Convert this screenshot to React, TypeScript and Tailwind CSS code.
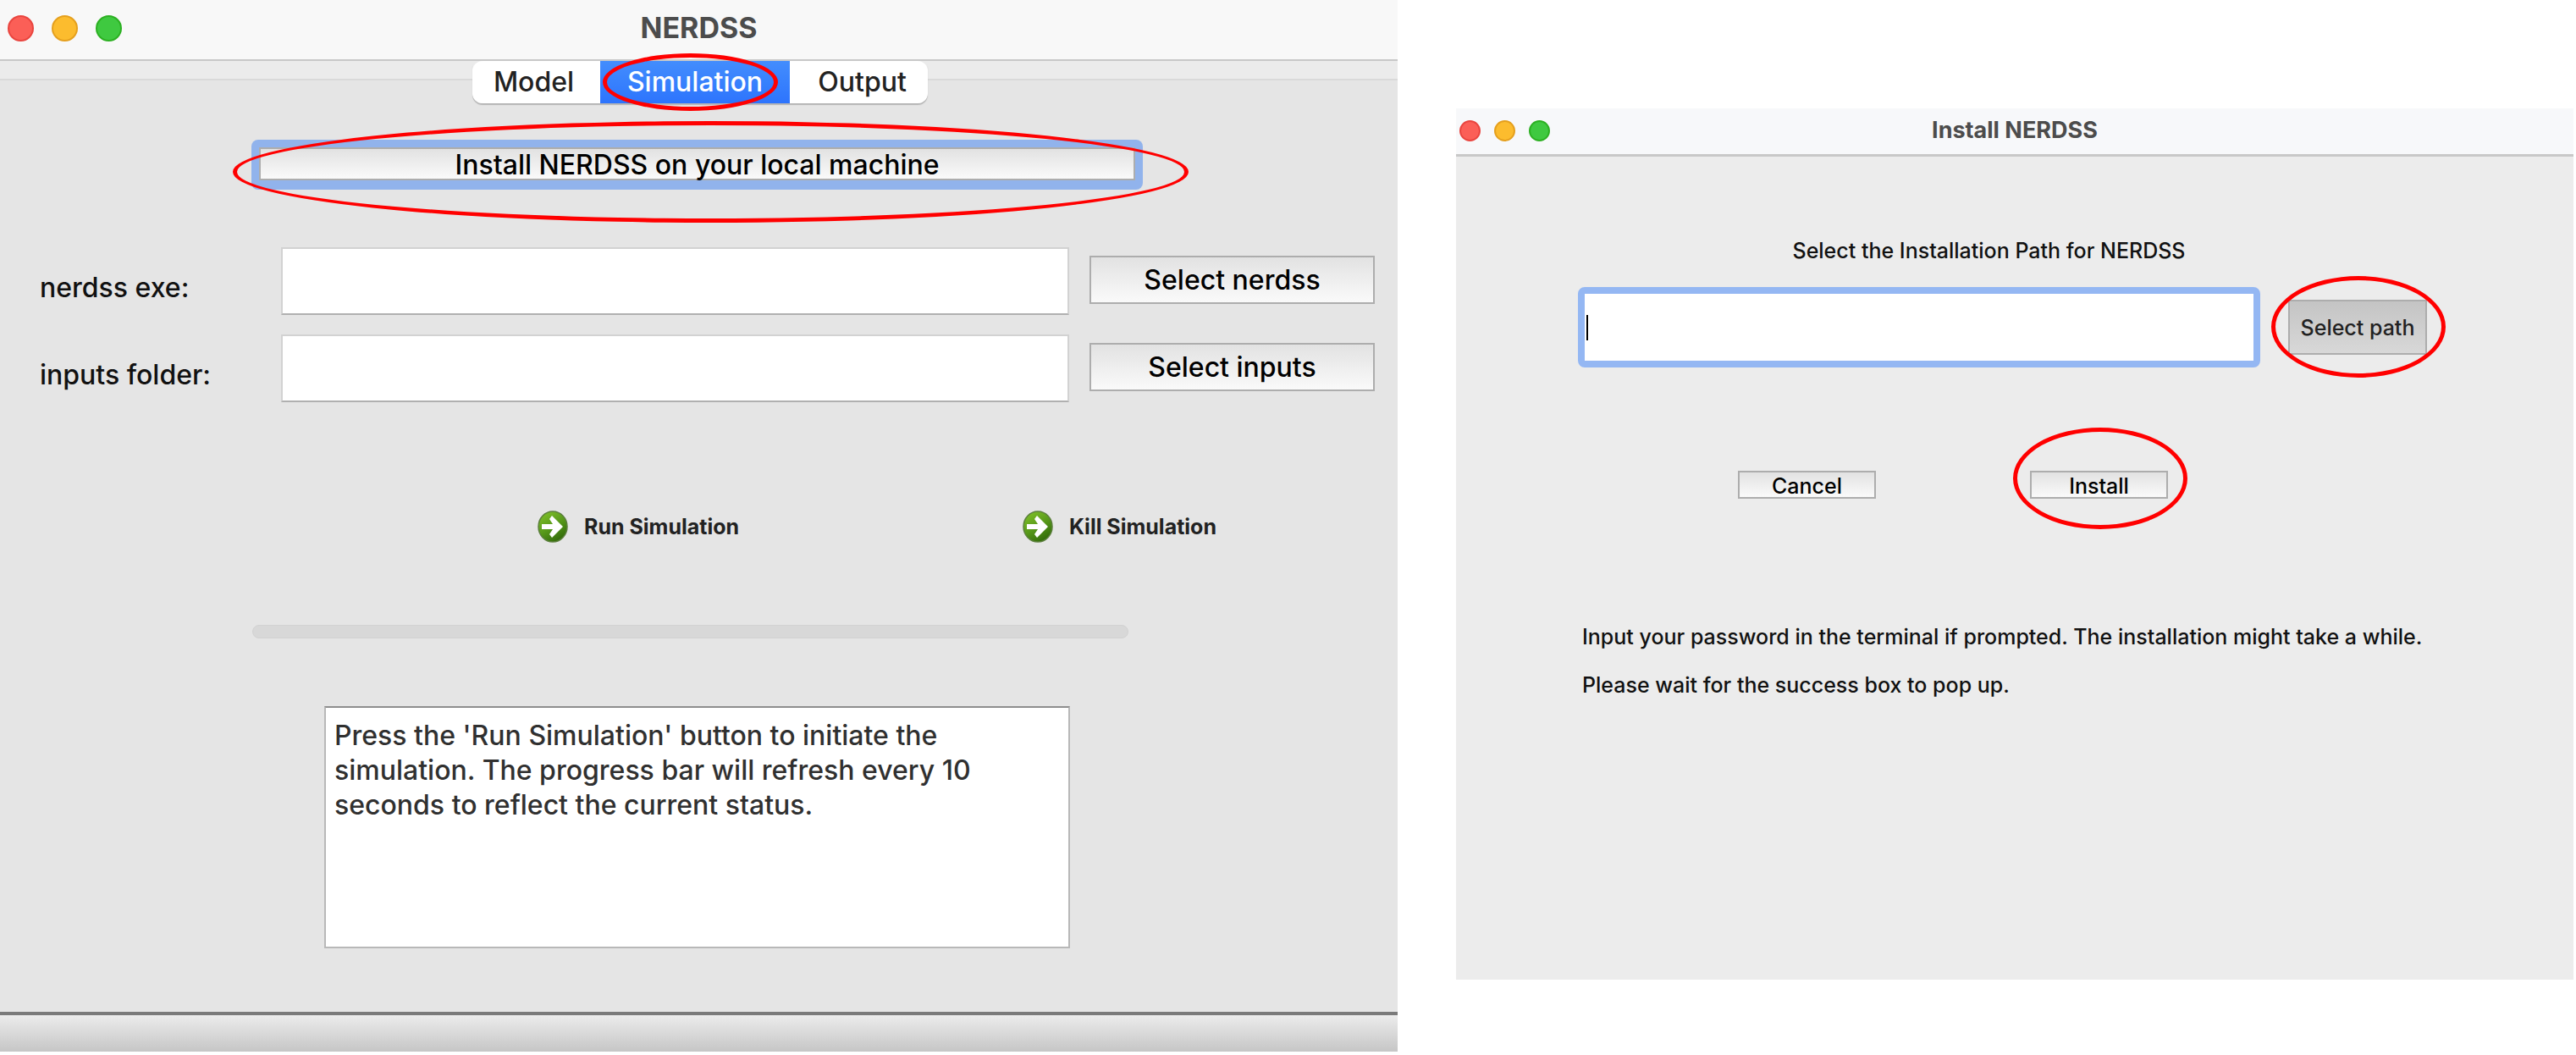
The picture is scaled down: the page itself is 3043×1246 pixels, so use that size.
import type { ReactNode } from "react";

function Lights({ small }: { small?: boolean }) {
  const size = small ? "size-[25px]" : "size-[31px]";
  return (
    <div className={small ? "flex gap-4 pl-1" : "flex gap-[21px] pl-[9px]"}>
      <button aria-label="Close" className={`${size} rounded-full border-2 border-[#e9453f] bg-[#fb5f57]`} />
      <button aria-label="Minimize" className={`${size} rounded-full border-2 border-[#e5a01e] bg-[#fcbc2e]`} />
      <button aria-label="Zoom" className={`${size} rounded-full border-2 border-[#2cb022] bg-[#3fc940]`} />
    </div>
  );
}

/* Red ellipse that marks the control it lies over. */
function Ring({ className }: { className: string }) {
  return <span aria-hidden="true" className={`pointer-events-none absolute z-10 rounded-[50%] border-[5px] border-[#ff0000] ${className}`} />;
}

function PushButton({ className, children }: { className: string; children: ReactNode }) {
  return (
    <button className={`flex items-center justify-center border-2 border-[#adadad] bg-linear-to-b from-[#e2e2e2] to-[#fafafa] whitespace-nowrap text-black ${className}`}>
      {children}
    </button>
  );
}

function ArrowIcon({ id }: { id: string }) {
  return (
    <svg viewBox="0 0 36 38" className="h-[38px] w-9" aria-hidden="true">
      <defs>
        <linearGradient id={id} x1="0.2" y1="0" x2="0.8" y2="1">
          <stop offset="0" stopColor="#7fc028" />
          <stop offset="0.5" stopColor="#57981a" />
          <stop offset="1" stopColor="#2c6407" />
        </linearGradient>
      </defs>
      <ellipse cx="18" cy="19" rx="17" ry="18" fill={`url(#${id})`} stroke="#5b7f3c" strokeWidth="1.5" />
      <path d="M5 16h13l-4-6 3-4 13 13-13 13-3-4 4-6H5z" fill="#fff" />
    </svg>
  );
}

function FileRow({ id, label, action }: { id: string; label: string; action: string }) {
  return (
    <div className="flex h-20 items-start">
      <label htmlFor={id} className="w-[285px] shrink-0 pt-7">{label}</label>
      <input id={id} type="text" className="h-20 min-w-0 flex-1 border-2 border-[#d2d2d2] border-b-[#b0b0b0] bg-white px-2 outline-none" />
      <PushButton className="mt-2.5 ml-6 h-[57px] w-[337px] shrink-0">{action}</PushButton>
    </div>
  );
}

function MainWindow() {
  return (
    <section className="flex min-w-0 flex-[1651] flex-col self-start bg-[#e5e5e5] text-[32px] leading-10 font-medium text-[#111]">
      <header className="grid h-[72px] grid-cols-[1fr_auto_1fr] items-center border-b-2 border-[#c8c8c8] bg-[#f8f8f8] pb-1">
        <Lights />
        <h1 className="text-[34px] font-bold text-[#4c4c4c]">NERDSS</h1>
      </header>

      <nav role="tablist" className="flex h-[50px] justify-center bg-[linear-gradient(#ebebeb_21px,#d9d9d9_21px,#d9d9d9_23px,#e5e5e5_23px)] pl-[3px]">
        <div className="flex rounded-xl rounded-t-lg shadow-[0_2px_1px_#b4b4b4]">
          <button role="tab" aria-selected="false" className="w-[151px] rounded-l-xl bg-white pr-1.5 text-[#222]">Model</button>
          <button role="tab" aria-selected="true" className="relative w-[224px] bg-linear-to-b from-[#438dfd] to-[#2d74fd] text-white">
            Simulation
            <Ring className="-top-[9px] left-[3px] h-[68px] w-[207px]" />
          </button>
          <button role="tab" aria-selected="false" className="w-[163px] rounded-r-xl bg-white pl-2 text-[#222]">Output</button>
        </div>
      </nav>

      <div className="relative mt-[43px] mr-[301px] ml-[297px] rounded-lg bg-[#91b3ec] px-[9px] pt-[9px] pb-[11px]">
        <PushButton className="h-[39px] w-full pt-0.5">Install NERDSS on your local machine</PushButton>
        <Ring className="-top-[22px] -right-[54px] -left-[22px] h-[120px]" />
      </div>

      <form className="mt-[68px] mr-[27px] ml-[47px] flex flex-col gap-[23px]">
        <FileRow id="exe" label="nerdss exe:" action="Select nerdss" />
        <FileRow id="inputs" label="inputs folder:" action="Select inputs" />
      </form>

      <div className="mt-[127px] flex justify-between pr-[214px] pl-[635px] text-[25px] font-bold text-[#222]">
        <button className="flex items-center gap-[19px] whitespace-nowrap">
          <ArrowIcon id="run" />
          Run Simulation
        </button>
        <button className="flex items-center gap-[19px] whitespace-nowrap">
          <ArrowIcon id="kill" />
          Kill Simulation
        </button>
      </div>

      <div role="progressbar" aria-label="Simulation progress" aria-valuenow={0} className="mt-24 mr-[318px] ml-[298px] h-4 rounded-full border border-[#d2d2d2] bg-[#d8d8d8]" />

      <textarea
        readOnly
        aria-label="Status"
        className="mt-20 mr-[387px] ml-[383px] h-[286px] resize-none border-2 border-[#b8b8b8] border-t-[#8e8e8e] bg-white px-2.5 py-3 leading-[41px] text-[#303030] outline-none"
        defaultValue="Press the 'Run Simulation' button to initiate the simulation. The progress bar will refresh every 10 seconds to reflect the current status."
      />

      <footer className="mt-[75px] h-[47px] border-t-4 border-[#7a7a7a] bg-linear-to-b from-[#ececec] to-[#c6c6c6]" />
    </section>
  );
}

function InstallWindow() {
  return (
    <section className="mt-32 flex min-w-0 flex-[1320] flex-col self-start bg-[#ececec] pb-[332px] text-[25px] leading-8 font-medium text-[#111]">
      <header className="grid h-[57px] grid-cols-[1fr_auto_1fr] items-center border-b-[3px] border-[#c8c8c8] bg-[#f7f8fa] pb-0.5">
        <Lights small />
        <h2 className="text-[27px] font-bold text-[#4c4c4c]">Install NERDSS</h2>
      </header>

      <label htmlFor="path" className="mt-[95px] mr-[61px] self-center">Select the Installation Path for NERDSS</label>

      <div className="mt-[27px] mr-[173px] ml-36 flex items-center">
        <div className="relative flex min-w-0 flex-1 items-center">
          <input id="path" type="text" className="h-[95px] w-full rounded-lg border-8 border-[#94b7f3] bg-white px-1 outline-none" />
          <span aria-hidden="true" className="absolute left-2.5 h-[30px] w-0.5 bg-black" />
        </div>
        <div className="relative ml-[33px] shrink-0">
          <button className="h-[65px] w-[164px] border-2 border-[#adadad] bg-linear-to-b from-[#c4c4c4] to-[#d8d8d8] whitespace-nowrap text-[#222]">
            Select path
          </button>
          <Ring className="-top-7 -left-5 h-[120px] w-[206px]" />
        </div>
      </div>

      <div className="mt-[122px] ml-[333px] flex gap-[182px]">
        <PushButton className="h-[33px] w-[163px] pt-0.5">Cancel</PushButton>
        <div className="relative">
          <PushButton className="h-[33px] w-[163px] pt-0.5">Install</PushButton>
          <Ring className="-top-[51px] -left-5 h-[120px] w-[206px]" />
        </div>
      </div>

      <div className="mt-[147px] ml-[149px] flex flex-col gap-[25px]">
        <p>Input your password in the terminal if prompted. The installation might take a while.</p>
        <p>Please wait for the success box to pop up.</p>
      </div>
    </section>
  );
}

export default function App() {
  return (
    <main className="flex min-h-screen gap-[69px] bg-white pr-[3px] font-['Inter',sans-serif]">
      <MainWindow />
      <InstallWindow />
    </main>
  );
}
